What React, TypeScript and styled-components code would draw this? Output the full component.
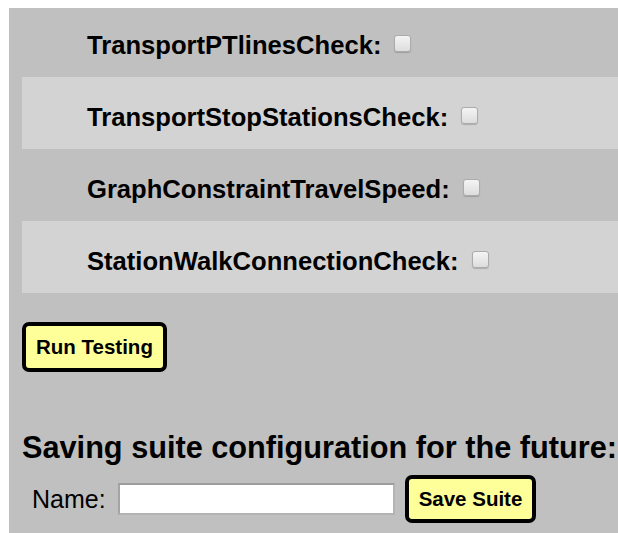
import React from 'react';
import styled, { createGlobalStyle } from 'styled-components';

const checks = [
  'TransportPTlinesCheck',
  'TransportStopStationsCheck',
  'GraphConstraintTravelSpeed',
  'StationWalkConnectionCheck',
];

const GlobalStyle = createGlobalStyle`
  html, body {
    background: #ffffff;
  }
  body {
    margin: 8px 0 0 9px;
    overflow: hidden;
    font-family: "Liberation Sans", Arial, sans-serif;
    color: #000;
  }
`;

const Panel = styled.div`
  background: #c0c0c0;
  min-height: calc(100vh - 8px);
  padding: 0 0 0 13px;
  box-sizing: border-box;
`;

const CheckList = styled.div`
  display: flex;
  flex-direction: column;
`;

const CheckRow = styled.label<{ $shaded: boolean }>`
  display: flex;
  align-items: center;
  height: 72px;
  padding: 8px 0 0 65px;
  box-sizing: border-box;
  background: ${(p) => (p.$shaded ? '#d3d3d3' : 'transparent')};

  &:first-child {
    height: 69px;
    padding-top: 5px;
  }
`;

const CheckName = styled.span`
  font-size: 25.6px;
  font-weight: 700;
  white-space: nowrap;
`;

const Box = styled.input`
  appearance: none;
  width: 17px;
  height: 17px;
  margin: 0 0 3px 13px;
  border: 1px solid #ababab;
  border-radius: 3px;
  background: linear-gradient(#f4f4f4, #dddddd);
  box-shadow: 0 1px 1px rgba(0, 0, 0, 0.18);
  box-sizing: border-box;
`;

const ActionButton = styled.button<{ $h: number }>`
  height: ${(p) => p.$h}px;
  padding: 0 10px;
  border: 4px solid #000;
  border-radius: 7px;
  background: #ffff99;
  font-family: "Liberation Sans", Arial, sans-serif;
  font-size: 20.5px;
  font-weight: 700;
  color: #000;
  white-space: nowrap;
`;

const RunArea = styled.div`
  margin-top: 29px;
`;

const Heading = styled.h2`
  margin: 58px 0 0;
  font-size: 30.7px;
  line-height: 35px;
  font-weight: 700;
  white-space: nowrap;
`;

const SaveRow = styled.div`
  display: flex;
  align-items: center;
  margin-top: 10px;
  padding-left: 10px;
  padding-bottom: 10px;
`;

const NameLabel = styled.span`
  font-size: 25px;
  margin-right: 12px;
`;

const NameInput = styled.input`
  width: 277px;
  height: 32px;
  box-sizing: border-box;
  border: 2px solid #b4b4b4;
  border-top-color: #9c9c9c;
  border-left-color: #a4a4a4;
  background: #fff;
  margin-right: 10px;
`;

export default function App() {
  return (
    <>
      <GlobalStyle />
      <Panel>
        <CheckList>
          {checks.map((name, i) => (
            <CheckRow key={name} $shaded={i % 2 === 1}>
              <CheckName>{name}:</CheckName>
              <Box type="checkbox" />
            </CheckRow>
          ))}
        </CheckList>
        <RunArea>
          <ActionButton $h={50}>Run Testing</ActionButton>
        </RunArea>
        <Heading>Saving suite configuration for the future:</Heading>
        <SaveRow>
          <NameLabel>Name:</NameLabel>
          <NameInput type="text" />
          <ActionButton $h={48}>Save Suite</ActionButton>
        </SaveRow>
      </Panel>
    </>
  );
}
